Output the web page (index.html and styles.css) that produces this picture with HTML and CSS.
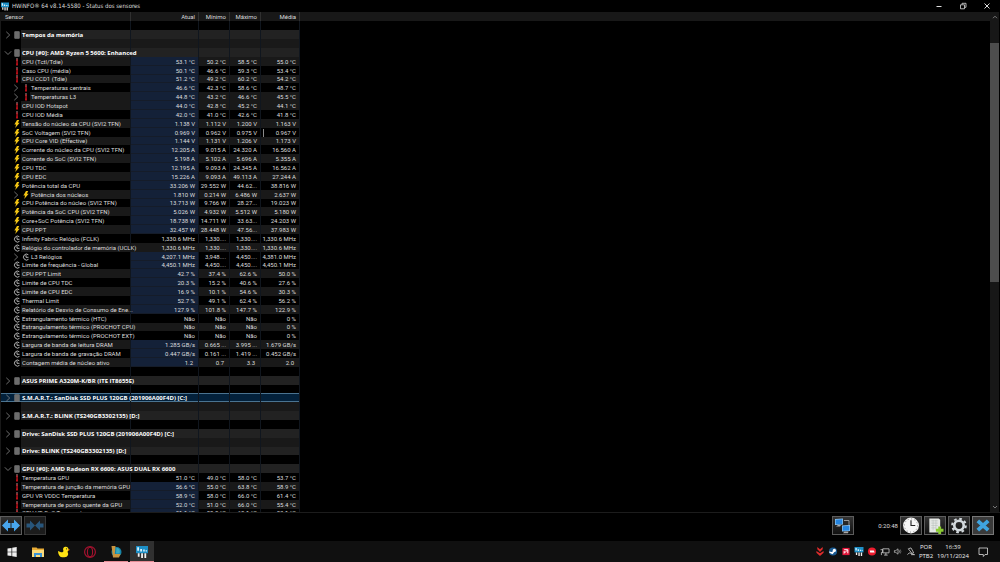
FILE: index.html
```
<!DOCTYPE html>
<html lang="pt-BR">
<head>
<meta charset="utf-8">
<title>HWiNFO® 64 v8.14-5580 - Status dos sensores</title>
<link rel="stylesheet" href="styles.css">
</head>
<body>
<svg class="defs" aria-hidden="true">
  <symbol id="temp" viewBox="0 0 4 8"><path d="M1.500 0h1v3h-1z" fill="#b08a8a"/><path d="M1.400 1.500h1.300v5.500H1.400z" fill="#cf1620"/><path d="M1 5.500h2V7.500H1z" fill="#b80d16"/></symbol>
  <symbol id="bolt" viewBox="0 0 6 9"><path d="M3 0h2.500L4 3h2L1 9l1-4H0z" fill="#f2c414"/></symbol>
  <symbol id="clk" viewBox="0 0 8 8"><path d="M6.300 1.700A3 3 0 1 0 6.500 6.300M4 2.200V4.300h2.500" fill="none" stroke="#c4c4c4" stroke-width=".9"/></symbol>
  <symbol id="chip" viewBox="0 0 6 8"><rect x=".3" y=".3" width="5.400" height="7.400" rx=".8" fill="#777"/><path d="M1 2h4M1 4h4M1 6h4" stroke="#555" stroke-width=".6"/></symbol>
  <symbol id="right" viewBox="0 0 6 8"><path d="M1.300.8 4.700 4 1.300 7.200" fill="none" stroke="#8a8a8a" stroke-width=".8"/></symbol>
  <symbol id="down" viewBox="0 0 8 6"><path d="M.8 1.300 4 4.500 7.200 1.300" fill="none" stroke="#8a8a8a" stroke-width=".8"/></symbol>
  <symbol id="hw" viewBox="0 0 10 10"><path d="M0 0h10v6H0z" fill="#1d8fc6"/><path d="M1 1h1.500v3H1zM3.500 2.500H5v2H3.500zM6 3h1.300v1.500H6zM8 3.500h1.200v1H8z" fill="#d8f0fb"/><path d="M1.500 6h1.500v3H1.500zM4.300 6h1.500v4H4.300zM7 6h1.500v4H7z" fill="#f2f2f2"/></symbol>
</svg>

<header class="titlebar">
  <svg class="app-icon"><use href="#hw"/></svg>
  <h1>HWiNFO® 64 v8.14-5580 - Status dos sensores</h1>
  <div class="win-buttons">
    <button aria-label="Minimizar"><svg viewBox="0 0 8 8"><path d="M1.500 4.500h5" stroke="#ddd" stroke-width="1"/></svg></button>
    <button aria-label="Restaurar"><svg viewBox="0 0 8 8"><path d="M1.500 2.800h4v4h-4zM3 2.500V1.300h4v4H5.800" fill="none" stroke="#ddd" stroke-width=".8"/></svg></button>
    <button aria-label="Fechar"><svg viewBox="0 0 8 8"><path d="M1.500 1.500l5 5M6.500 1.500l-5 5" stroke="#ddd" stroke-width="1"/></svg></button>
  </div>
</header>

<main class="content">
  <div class="list">
    <table class="sensors">
      <colgroup><col class="c-icon"><col class="c-name"><col class="c-now"><col class="c-min"><col class="c-max"><col class="c-avg"></colgroup>
      <thead><tr><th colspan="2" class="first">Sensor</th><th>Atual</th><th>Mínimo</th><th>Máximo</th><th>Média</th></tr></thead>
      <tbody>
        <tr><td></td><td></td><td></td><td></td><td></td><td></td></tr>
        <tr class="group"><td><span class="lead"><button aria-label="Expandir"><svg class="rt"><use href="#right"/></svg></button><svg class="chip"><use href="#chip"/></svg></span></td><th scope="row">Tempos da memória</th><td></td><td></td><td></td><td></td></tr>
        <tr class="odd"><td></td><td></td><td></td><td></td><td></td><td></td></tr>
        <tr class="group"><td><span class="lead"><button aria-label="Recolher"><svg class="dn"><use href="#down"/></svg></button><svg class="chip"><use href="#chip"/></svg></span></td><th scope="row">CPU [#0]: AMD Ryzen 5 5600: Enhanced</th><td></td><td></td><td></td><td></td></tr>
        <tr class="odd hot"><td><svg class="i-temp"><use href="#temp"/></svg></td><td>CPU (Tctl/Tdie)</td><td>53.1 °C</td><td>50.2 °C</td><td>58.5 °C</td><td>55.0 °C</td></tr>
        <tr class="hot"><td><svg class="i-temp"><use href="#temp"/></svg></td><td>Caso CPU (média)</td><td>50.1 °C</td><td>46.6 °C</td><td>59.3 °C</td><td>53.4 °C</td></tr>
        <tr class="odd hot"><td><svg class="i-temp"><use href="#temp"/></svg></td><td>CPU CCD1 (Tdie)</td><td>51.2 °C</td><td>49.2 °C</td><td>60.2 °C</td><td>54.2 °C</td></tr>
        <tr class="hot child"><td><button aria-label="Expandir"><svg class="rt"><use href="#right"/></svg></button></td><td><svg class="i-temp"><use href="#temp"/></svg>Temperaturas centrais</td><td>46.6 °C</td><td>42.3 °C</td><td>58.6 °C</td><td>48.7 °C</td></tr>
        <tr class="odd hot child"><td><button aria-label="Expandir"><svg class="rt"><use href="#right"/></svg></button></td><td><svg class="i-temp"><use href="#temp"/></svg>Temperaturas L3</td><td>44.8 °C</td><td>43.2 °C</td><td>46.6 °C</td><td>45.5 °C</td></tr>
        <tr class="odd hot"><td><svg class="i-temp"><use href="#temp"/></svg></td><td>CPU IOD Hotspot</td><td>44.0 °C</td><td>42.8 °C</td><td>45.2 °C</td><td>44.1 °C</td></tr>
        <tr class="hot"><td><svg class="i-temp"><use href="#temp"/></svg></td><td>CPU IOD Média</td><td>42.0 °C</td><td>41.0 °C</td><td>42.6 °C</td><td>41.8 °C</td></tr>
        <tr class="odd hot"><td><svg class="i-bolt"><use href="#bolt"/></svg></td><td>Tensão do núcleo da CPU (SVI2 TFN)</td><td>1.138 V</td><td>1.112 V</td><td>1.200 V</td><td>1.163 V</td></tr>
        <tr class="hot"><td><svg class="i-bolt"><use href="#bolt"/></svg></td><td>SoC Voltagem (SVI2 TFN)</td><td>0.969 V</td><td>0.962 V</td><td>0.975 V</td><td><span class="caret">0.967 V</span></td></tr>
        <tr class="odd hot"><td><svg class="i-bolt"><use href="#bolt"/></svg></td><td>CPU Core VID (Effective)</td><td>1.144 V</td><td>1.131 V</td><td>1.206 V</td><td>1.173 V</td></tr>
        <tr class="hot"><td><svg class="i-bolt"><use href="#bolt"/></svg></td><td>Corrente do núcleo da CPU (SVI2 TFN)</td><td>12.205 A</td><td>9.015 A</td><td>24.320 A</td><td>16.560 A</td></tr>
        <tr class="odd hot"><td><svg class="i-bolt"><use href="#bolt"/></svg></td><td>Corrente do SoC (SVI2 TFN)</td><td>5.198 A</td><td>5.102 A</td><td>5.696 A</td><td>5.355 A</td></tr>
        <tr class="hot"><td><svg class="i-bolt"><use href="#bolt"/></svg></td><td>CPU TDC</td><td>12.195 A</td><td>9.093 A</td><td>24.345 A</td><td>16.562 A</td></tr>
        <tr class="odd hot"><td><svg class="i-bolt"><use href="#bolt"/></svg></td><td>CPU EDC</td><td>15.226 A</td><td>9.093 A</td><td>49.113 A</td><td>27.244 A</td></tr>
        <tr class="hot"><td><svg class="i-bolt"><use href="#bolt"/></svg></td><td>Potência total da CPU</td><td>33.206 W</td><td>29.552 W</td><td>44.62...</td><td>38.816 W</td></tr>
        <tr class="odd hot child"><td><button aria-label="Expandir"><svg class="rt"><use href="#right"/></svg></button></td><td><svg class="i-bolt"><use href="#bolt"/></svg>Potência dos núcleos</td><td>1.810 W</td><td>0.214 W</td><td>6.486 W</td><td>2.637 W</td></tr>
        <tr class="hot"><td><svg class="i-bolt"><use href="#bolt"/></svg></td><td>CPU Potência do núcleo (SVI2 TFN)</td><td>13.713 W</td><td>9.766 W</td><td>28.27...</td><td>19.023 W</td></tr>
        <tr class="odd hot"><td><svg class="i-bolt"><use href="#bolt"/></svg></td><td>Potência da SoC CPU (SVI2 TFN)</td><td>5.026 W</td><td>4.932 W</td><td>5.512 W</td><td>5.180 W</td></tr>
        <tr class="hot"><td><svg class="i-bolt"><use href="#bolt"/></svg></td><td>Core+SoC Potência (SVI2 TFN)</td><td>18.738 W</td><td>14.711 W</td><td>33.63...</td><td>24.203 W</td></tr>
        <tr class="odd hot"><td><svg class="i-bolt"><use href="#bolt"/></svg></td><td>CPU PPT</td><td>32.457 W</td><td>28.448 W</td><td>47.56...</td><td>37.983 W</td></tr>
        <tr><td><svg class="i-clk"><use href="#clk"/></svg></td><td>Infinity Fabric Relógio (FCLK)</td><td>1,330.6 MHz</td><td>1,330....</td><td>1,330....</td><td>1,330.6 MHz</td></tr>
        <tr class="odd"><td><svg class="i-clk"><use href="#clk"/></svg></td><td>Relógio do controlador de memória (UCLK)</td><td>1,330.6 MHz</td><td>1,330....</td><td>1,330....</td><td>1,330.6 MHz</td></tr>
        <tr class="hot child"><td><button aria-label="Expandir"><svg class="rt"><use href="#right"/></svg></button></td><td><svg class="i-clk"><use href="#clk"/></svg>L3 Relógios</td><td>4,207.1 MHz</td><td>3,948....</td><td>4,450....</td><td>4,381.0 MHz</td></tr>
        <tr class="hot"><td><svg class="i-clk"><use href="#clk"/></svg></td><td>Limite de frequência - Global</td><td>4,450.1 MHz</td><td>4,450....</td><td>4,450....</td><td>4,450.1 MHz</td></tr>
        <tr class="odd hot"><td><svg class="i-clk"><use href="#clk"/></svg></td><td>CPU PPT Limit</td><td>42.7 %</td><td>37.4 %</td><td>62.6 %</td><td>50.0 %</td></tr>
        <tr class="hot"><td><svg class="i-clk"><use href="#clk"/></svg></td><td>Limite de CPU TDC</td><td>20.3 %</td><td>15.2 %</td><td>40.6 %</td><td>27.6 %</td></tr>
        <tr class="odd hot"><td><svg class="i-clk"><use href="#clk"/></svg></td><td>Limite de CPU EDC</td><td>16.9 %</td><td>10.1 %</td><td>54.6 %</td><td>30.3 %</td></tr>
        <tr class="hot"><td><svg class="i-clk"><use href="#clk"/></svg></td><td>Thermal Limit</td><td>52.7 %</td><td>49.1 %</td><td>62.4 %</td><td>56.2 %</td></tr>
        <tr class="odd hot"><td><svg class="i-clk"><use href="#clk"/></svg></td><td>Relatório de Desvio de Consumo de Ene...</td><td>127.9 %</td><td>101.8 %</td><td>147.7 %</td><td>122.9 %</td></tr>
        <tr><td><svg class="i-clk"><use href="#clk"/></svg></td><td>Estrangulamento térmico (HTC)</td><td>Não</td><td>Não</td><td>Não</td><td>0 %</td></tr>
        <tr class="odd"><td><svg class="i-clk"><use href="#clk"/></svg></td><td>Estrangulamento térmico (PROCHOT CPU)</td><td>Não</td><td>Não</td><td>Não</td><td>0 %</td></tr>
        <tr><td><svg class="i-clk"><use href="#clk"/></svg></td><td>Estrangulamento térmico (PROCHOT EXT)</td><td>Não</td><td>Não</td><td>Não</td><td>0 %</td></tr>
        <tr class="odd hot"><td><svg class="i-clk"><use href="#clk"/></svg></td><td>Largura de banda de leitura DRAM</td><td>1.285 GB/s</td><td>0.665 ...</td><td>3.995 ...</td><td>1.679 GB/s</td></tr>
        <tr class="hot"><td><svg class="i-clk"><use href="#clk"/></svg></td><td>Largura de banda de gravação DRAM</td><td>0.447 GB/s</td><td>0.161 ...</td><td>1.419 ...</td><td>0.452 GB/s</td></tr>
        <tr class="odd hot unitless"><td><svg class="i-clk"><use href="#clk"/></svg></td><td>Contagem média de núcleo ativo</td><td>1.2</td><td>0.7</td><td>3.3</td><td>2.0</td></tr>
        <tr><td></td><td></td><td></td><td></td><td></td><td></td></tr>
        <tr class="group"><td><span class="lead"><button aria-label="Expandir"><svg class="rt"><use href="#right"/></svg></button><svg class="chip"><use href="#chip"/></svg></span></td><th scope="row">ASUS PRIME A320M-K/BR (ITE IT8655E)</th><td></td><td></td><td></td><td></td></tr>
        <tr><td></td><td></td><td></td><td></td><td></td><td></td></tr>
        <tr class="group selected"><td><span class="lead"><button aria-label="Expandir"><svg class="rt"><use href="#right"/></svg></button><svg class="chip"><use href="#chip"/></svg></span></td><th scope="row">S.M.A.R.T.: SanDisk SSD PLUS 120GB (201906A00F4D) [C:]</th><td></td><td></td><td></td><td></td></tr>
        <tr class="odd"><td></td><td></td><td></td><td></td><td></td><td></td></tr>
        <tr class="group"><td><span class="lead"><button aria-label="Expandir"><svg class="rt"><use href="#right"/></svg></button><svg class="chip"><use href="#chip"/></svg></span></td><th scope="row">S.M.A.R.T.: BLINK (TS240GB3302135) [D:]</th><td></td><td></td><td></td><td></td></tr>
        <tr><td></td><td></td><td></td><td></td><td></td><td></td></tr>
        <tr class="group"><td><span class="lead"><button aria-label="Expandir"><svg class="rt"><use href="#right"/></svg></button><svg class="chip"><use href="#chip"/></svg></span></td><th scope="row">Drive: SanDisk SSD PLUS 120GB (201906A00F4D) [C:]</th><td></td><td></td><td></td><td></td></tr>
        <tr class="odd"><td></td><td></td><td></td><td></td><td></td><td></td></tr>
        <tr class="group"><td><span class="lead"><button aria-label="Expandir"><svg class="rt"><use href="#right"/></svg></button><svg class="chip"><use href="#chip"/></svg></span></td><th scope="row">Drive: BLINK (TS240GB3302135) [D:]</th><td></td><td></td><td></td><td></td></tr>
        <tr><td></td><td></td><td></td><td></td><td></td><td></td></tr>
        <tr class="group"><td><span class="lead"><button aria-label="Recolher"><svg class="dn"><use href="#down"/></svg></button><svg class="chip"><use href="#chip"/></svg></span></td><th scope="row">GPU [#0]: AMD Radeon RX 6600: ASUS DUAL RX 6600</th><td></td><td></td><td></td><td></td></tr>
        <tr><td><svg class="i-temp"><use href="#temp"/></svg></td><td>Temperatura GPU</td><td>51.0 °C</td><td>49.0 °C</td><td>58.0 °C</td><td>53.7 °C</td></tr>
        <tr class="odd hot"><td><svg class="i-temp"><use href="#temp"/></svg></td><td>Temperatura de junção da memória GPU</td><td>56.6 °C</td><td>55.0 °C</td><td>63.8 °C</td><td>58.9 °C</td></tr>
        <tr class="hot"><td><svg class="i-temp"><use href="#temp"/></svg></td><td>GPU VR VDDC Temperatura</td><td>58.9 °C</td><td>58.0 °C</td><td>66.0 °C</td><td>61.4 °C</td></tr>
        <tr class="odd hot"><td><svg class="i-temp"><use href="#temp"/></svg></td><td>Temperatura de ponto quente da GPU</td><td>52.0 °C</td><td>51.0 °C</td><td>66.0 °C</td><td>55.4 °C</td></tr>
        <tr class="hot"><td><svg class="i-temp"><use href="#temp"/></svg></td><td>GPU VR SoC Temperatura</td><td>51.1 °C</td><td>50.0 °C</td><td>60.1 °C</td><td>53.1 °C</td></tr>
      </tbody>
    </table>
  </div>
  <div class="empty"></div>
  <div class="scrollbar">
    <svg viewBox="0 0 8 8"><path d="M2 5.200 4 3.200 6 5.200" fill="none" stroke="#777"/></svg>
    <div class="track"><div class="thumb"></div></div>
    <svg viewBox="0 0 8 8"><path d="M2 3 4 5 6 3" fill="none" stroke="#777"/></svg>
  </div>
</main>

<div class="toolbar">
  <button aria-label="Expandir colunas"><svg viewBox="0 0 20 16"><path d="M1 8l6-6v3.500h2.500v5H7V14zM19 8l-6-6v3.500h-2.500v5H13V14z" fill="#48a6ee"/></svg></button>
  <button class="dim" aria-label="Recolher colunas"><svg viewBox="0 0 20 16"><path d="M10 8L5 3v3H1.500v4H5v3zM10 8l5-5v3h3.500v4H15v3z" fill="#28567c"/></svg></button>
  <span class="spacer"></span>
  <button aria-label="Rede"><svg viewBox="0 0 20 16"><path d="M11 3h5v5" fill="none" stroke="#999"/><path d="M2 1.500l8-.5v6l-8 .5z" fill="#8fc4ee"/><path d="M2.700 2.200l6.600-.4v4.600l-6.600.4z" fill="#2584df"/><path d="M3 9h4l1-1.500H5z" fill="#aaa"/><path d="M9 8l8-.5v6L9 14z" fill="#8fc4ee"/><path d="M9.700 8.700l6.600-.4v4.600l-6.600.4z" fill="#2584df"/><path d="M10 15.700h5l.5-1.700h-4z" fill="#aaa"/></svg></button>
  <time class="elapsed">0:20:48</time>
  <button aria-label="Relógio"><svg viewBox="0 0 20 18"><circle cx="10" cy="9" r="8.400" fill="#f5f5f5"/><circle cx="10" cy="9" r="7" fill="none" stroke="#777" stroke-width="1" stroke-dasharray="1 2.660"/><path d="M10 3.500V9h4.500" fill="none" stroke="#222" stroke-width="1.200"/></svg></button>
  <button aria-label="Registrar"><svg viewBox="0 0 20 18"><path d="M4 1.500h10l1.500 1.500v13.500H4z" fill="#e5e8e5"/><path d="M6 4h7M6 6.500h7M6 9h7M6 11.500h5M8 3v11M11 3v11" stroke="#b9c0ba" stroke-width=".6"/><path d="M13.500 10h3v2.500H19v3h-2.500V18h-3v-2.500H11v-3h2.500z" fill="#8bcb32"/></svg></button>
  <button aria-label="Configurações"><svg viewBox="0 0 20 18"><circle cx="10" cy="9" r="5" fill="none" stroke="#d4dade" stroke-width="2.800"/><circle cx="10" cy="9" r="7.200" fill="none" stroke="#d4dade" stroke-width="2.200" stroke-dasharray="2.830 2.830"/></svg></button>
  <button class="close" aria-label="Fechar sensores"><svg viewBox="0 0 20 18"><path d="M4.500 4l11 10M15.500 4l-11 10" stroke="#3fa4e0" stroke-width="4"/></svg></button>
</div>

<footer class="taskbar">
  <button aria-label="Iniciar"><svg viewBox="0 0 12 12"><path d="M1.500 2.500l4-.6v3.800h-4zM6.200 1.800l4.500-.7v4.600H6.200zM1.500 6.300h4v3.800l-4-.6zM6.200 6.300h4.500v4.600l-4.500-.7z" fill="#f0f0f0"/></svg></button>
  <button aria-label="Explorador de Arquivos"><svg viewBox="0 0 12 12"><path d="M0 1.500h4.500l1 1H12V11H0z" fill="#e9ad36"/><path d="M0 4h12v7H0z" fill="#fbdb7c"/><path d="M2 7h8v4H8V9H4v2H2z" fill="#3a93d6"/></svg></button>
  <button aria-label="Pato"><svg viewBox="0 0 12 12"><path d="M0 5l3 1.200C4.500 6.500 5.500 6 5.400 4.800 4.500 2 6 .8 7.800.8s3 1.500 2.700 3L9.500 6C11 8 10 11 6.500 11.300H4C1.500 11 .2 8.500 0 5z" fill="#ffe213"/><path d="M10 3l2 .8-1.800 1.300z" fill="#f37a12"/><circle cx="8.500" cy="2.800" r=".6" fill="#222"/></svg></button>
  <button aria-label="Opera"><svg viewBox="0 0 12 12"><circle cx="6" cy="6" r="5.400" fill="none" stroke="#a5122f" stroke-width="1.200"/><ellipse cx="6" cy="6" rx="2.600" ry="4.800" fill="none" stroke="#a5122f" stroke-width="1.100"/></svg></button>
  <button class="running" aria-label="League of Legends"><svg viewBox="0 0 12 12"><circle cx="6.500" cy="6" r="5" fill="#1684a8"/><path d="M1.500 0h4L4.800 8h5.700L9 11.500H3z" fill="#c8943f"/><path d="M6.500 1.500c3 1 4 3 3 6H6z" fill="#36aac0"/></svg></button>
  <button class="running active" aria-label="HWiNFO"><svg><use href="#hw"/></svg></button>
  <span class="spacer"></span>
  <div class="tray">
    <svg viewBox="0 0 10 10"><path d="M2 0l3 2.500L8 0v2.500L5 5.500 2 2.500zM1 4.500l4 2.500 4-2.500V6.500L5 10 1 6.500z" fill="#df2c2c"/></svg>
    <svg viewBox="0 0 10 10"><circle cx="5" cy="5" r="4.500" fill="#1b5b92"/><circle cx="6.500" cy="3.800" r="1.800" fill="#fff"/><path d="M.7 5l3 .5L6 4l.5 1.500L4.500 8 1 6.500z" fill="#fff"/></svg>
    <svg viewBox="0 0 10 10"><path d="M1 1h8v8H1z" fill="#e2163a"/><path d="M3 3h4v4M6.500 3.500L3 7V4.500" fill="none" stroke="#fff" stroke-width="1.100"/></svg>
    <svg><use href="#hw"/></svg>
    <svg viewBox="0 0 10 10"><circle cx="5" cy="5" r="4.500" fill="#ed1c2e"/><path d="M2.500 4h4.500L8 6H3z" fill="#fff"/></svg>
    <svg viewBox="0 0 10 10"><path d="M2.500 2h7v4.500h-7zM6 6.500V9M4 9h4M0 3h2.500v3H1v3" fill="none" stroke="#ddd" stroke-width=".8"/></svg>
    <svg viewBox="0 0 10 10"><path d="M1 4h1.500L5 2v6L2.500 6H1zM6.300 3.700q1 1.300 0 2.600" fill="none" stroke="#ddd" stroke-width=".7"/><path d="M7.500 2.700q1.500 2.300 0 4.600" fill="none" stroke="#888" stroke-width=".7"/></svg>
    <svg viewBox="0 0 10 10"><path d="M2 2l3-1 3 5.500-2 .5zM1 8.500q2-3 4-1.500t4 1.500H5" fill="none" stroke="#ccc" stroke-width=".9"/></svg>
  </div>
  <div class="lang"><span>POR</span><span>PTB2</span></div>
  <div class="clock"><time>16:39</time><time>19/11/2024</time></div>
  <button class="notify" aria-label="Notificações"><svg viewBox="0 0 12 12"><path d="M2 2h8.500v6.500H8L6.300 10.500V8.500H2z" fill="none" stroke="#ddd" stroke-width=".8"/></svg></button>
</footer>
</body>
</html>
```
FILE: styles.css
```
* { box-sizing: border-box; }

body {
  margin: 0;
  height: 100vh;
  display: flex;
  flex-direction: column;
  overflow: hidden;
  background: #000;
  color: #dcdcdc;
  font-family: Roboto, "Liberation Sans", sans-serif;
  font-size: 6px;
}

button {
  display: flex;
  align-items: center;
  justify-content: center;
  padding: 0;
  border: 0;
  background: none;
  color: inherit;
  font: inherit;
}

svg { display: block; flex: none; }
.defs { display: none; }
.spacer { flex: 1; }

/* Title bar */
.titlebar {
  flex: none;
  display: flex;
  align-items: center;
  gap: 3px;
  height: 12px;
  padding-left: 1px;
}
.app-icon { width: 8px; height: 9px; }
.titlebar h1 {
  margin: 0;
  font-family: "DejaVu Sans Condensed", "DejaVu Sans", sans-serif;
  font-size: 6px;
  font-weight: 400;
  line-height: 12px;
}
.win-buttons { display: flex; margin-left: auto; padding-right: 1px; }
.win-buttons button { width: 24px; height: 12px; }
.win-buttons svg { width: 8px; height: 8px; }

/* Sensor list */
.content { flex: 1; min-height: 0; display: flex; overflow: hidden; }
.list { flex: none; overflow: hidden; }
.empty { flex: 1; border-top: 9px solid #181818; }

.sensors {
  width: 300px;
  table-layout: fixed;
  border-collapse: separate;
  border-spacing: 0;
  line-height: 8px;
}
.c-icon { width: 21px; }
.c-name { width: 110px; }
.c-now { width: 68px; }
.c-min { width: 31px; }
.c-max { width: 31px; }
.c-avg { width: 39px; }

.sensors td, .sensors th {
  padding: 0 3px 0 0;
  border-right: 1px solid #10161e;
  font-weight: 400;
  text-align: right;
  white-space: nowrap;
  vertical-align: middle;
}
.sensors thead th { height: 9px; background: #181818; border-color: #303030; }
.sensors thead .first { padding-left: 5px; text-align: left; }
.sensors tbody tr { height: 9px; }
.sensors tbody tr:nth-child(7n) { height: 8px; }
.sensors tbody td:first-child { padding: 0; border-right: 0; border-left: 1px solid #181818; }
.sensors tbody td:nth-child(2), .sensors tbody th { padding: 0 0 0 1px; text-align: left; }
.sensors .odd td:not(:first-child) { background: #191919; }
.sensors .hot td:nth-child(3) { background: #142138; box-shadow: inset 0 -1px #151c29; }
.sensors .unitless td:nth-child(n+3) { padding-right: 5px; }
.caret { display: block; margin-left: 2px; border-left: 1px solid #8a8a8a; }

.sensors .group td:not(:first-child), .sensors .group th { background: #222; }
.sensors .group th {
  color: #fff;
  font-family: "Open Sans", "Noto Sans", sans-serif;
  font-weight: 700;
}
.lead { display: flex; align-items: center; padding-left: 1px; }
.lead button { width: 11px; height: 8px; margin-right: 1px; }
.rt { width: 6px; height: 8px; }
.dn { width: 8px; height: 6px; }
.chip { width: 6px; height: 8px; }

.i-temp { width: 4px; height: 8px; margin-left: 14px; }
.i-bolt { width: 6px; height: 8px; margin-left: 13px; }
.i-clk { width: 8px; height: 8px; margin-left: 12px; }
.child button { width: 6px; height: 8px; margin-left: 12px; }
.child td svg { display: inline-block; vertical-align: top; }
.child td .i-temp { margin: 0 3px 0 2px; }
.child td .i-bolt { margin: 0 2px 0 1px; }
.child td .i-clk { margin: 0 1px 0 0; }
.sensors .child.odd td:nth-child(2) { background: linear-gradient(to right, #000 9px, #191919 9px); }

.sensors .selected td:nth-child(n), .sensors .selected th {
  background: #03213b;
  box-shadow: inset 0 1px #4a7390, inset 0 -1px #4a7390;
}

/* Scroll bar */
.scrollbar {
  flex: none;
  width: 9px;
  margin-right: 1px;
  display: flex;
  flex-direction: column;
  align-items: center;
  background: #171717;
}
.scrollbar svg { width: 8px; height: 10px; }
.track { flex: 1; align-self: stretch; padding-top: 21px; }
.thumb { height: 52%; background: #4d4d4d; }

/* Tool bar */
.toolbar {
  flex: none;
  display: flex;
  align-items: center;
  gap: 2px;
  padding: 3px 6px 6px 0;
  border-top: 1px solid #1c1c1c;
}
.toolbar button {
  width: 22px;
  height: 19px;
  border: 1px solid #5c5c5c;
  background: linear-gradient(#333, #111);
}
.toolbar .dim { border-color: #383838; background: #1c1c1c; }
.toolbar svg { width: 20px; height: 17px; }
.toolbar .close { background: #3a3a3a; border-color: #777; }
.elapsed { width: 42px; text-align: right; }

/* Task bar */
.taskbar {
  flex: none;
  display: flex;
  align-items: center;
  height: 21px;
  background: #101010;
  font-family: "Open Sans", sans-serif;
  line-height: 9px;
  color: #eee;
}
.taskbar > button {
  width: 24px;
  height: 21px;
  margin-right: 2px;
  border-top: 1px solid transparent;
  border-bottom: 1px solid transparent;
}
.taskbar > button svg { width: 12px; height: 12px; }
.taskbar .running { border-bottom-color: #e58b94; }
.taskbar .active { background: #303030; }
.tray { display: flex; align-items: center; gap: 3px; margin-right: 1px; }
.tray svg { width: 10px; height: 9px; }
.lang, .clock { display: flex; flex-direction: column; align-items: center; }
.lang { width: 18px; }
.clock { width: 36px; }
.taskbar .notify { margin: 0 5px 0 0; }
```
